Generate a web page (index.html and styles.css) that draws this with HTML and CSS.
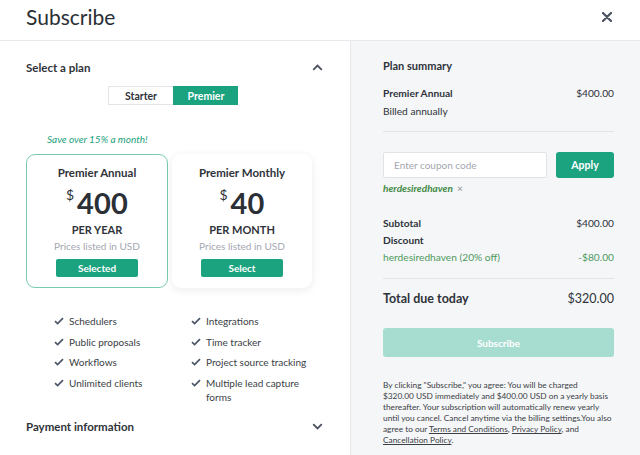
FILE: index.html
```html
<!DOCTYPE html>
<html>
<head>
<meta charset="utf-8">
<link rel="stylesheet" href="styles.css">
</head>
<body>
<div class="modal">
  <header class="modal-head">
    <h1 class="title">Subscribe</h1>
    <svg class="close" width="10" height="10" viewBox="0 0 10 10"><path d="M1 1L9 9M9 1L1 9" stroke="#4a5160" stroke-width="2.2" stroke-linecap="round"/></svg>
  </header>
  <div class="body">
    <section class="left">
      <div class="sec-head">
        <span>Select a plan</span>
        <svg width="11" height="7" viewBox="0 0 11 7"><path d="M1.2 5.8L5.5 1.5L9.8 5.8" fill="none" stroke="#4a5160" stroke-width="1.8"/></svg>
      </div>
      <div class="toggle">
        <span class="tog">Starter</span>
        <span class="tog on">Premier</span>
      </div>
      <div class="save">Save over 15% a month!</div>
      <div class="cards">
        <div class="card selected">
          <div class="card-name">Premier Annual</div>
          <div class="price"><span class="cur">$</span><span class="amt">400</span></div>
          <div class="per">PER YEAR</div>
          <div class="note">Prices listed in USD</div>
          <button class="btn-card">Selected</button>
        </div>
        <div class="card">
          <div class="card-name">Premier Monthly</div>
          <div class="price"><span class="cur">$</span><span class="amt">40</span></div>
          <div class="per">PER MONTH</div>
          <div class="note">Prices listed in USD</div>
          <button class="btn-card">Select</button>
        </div>
      </div>
      <ul class="features">
        <li><svg class="chk" width="10" height="8" viewBox="0 0 10 8"><path d="M1 4.2L3.6 6.6L9 1.2" fill="none" stroke="#4a5568" stroke-width="1.7"/></svg><span>Schedulers</span></li>
        <li><svg class="chk" width="10" height="8" viewBox="0 0 10 8"><path d="M1 4.2L3.6 6.6L9 1.2" fill="none" stroke="#4a5568" stroke-width="1.7"/></svg><span>Integrations</span></li>
        <li><svg class="chk" width="10" height="8" viewBox="0 0 10 8"><path d="M1 4.2L3.6 6.6L9 1.2" fill="none" stroke="#4a5568" stroke-width="1.7"/></svg><span>Public proposals</span></li>
        <li><svg class="chk" width="10" height="8" viewBox="0 0 10 8"><path d="M1 4.2L3.6 6.6L9 1.2" fill="none" stroke="#4a5568" stroke-width="1.7"/></svg><span>Time tracker</span></li>
        <li><svg class="chk" width="10" height="8" viewBox="0 0 10 8"><path d="M1 4.2L3.6 6.6L9 1.2" fill="none" stroke="#4a5568" stroke-width="1.7"/></svg><span>Workflows</span></li>
        <li><svg class="chk" width="10" height="8" viewBox="0 0 10 8"><path d="M1 4.2L3.6 6.6L9 1.2" fill="none" stroke="#4a5568" stroke-width="1.7"/></svg><span class="nw">Project source tracking</span></li>
        <li><svg class="chk" width="10" height="8" viewBox="0 0 10 8"><path d="M1 4.2L3.6 6.6L9 1.2" fill="none" stroke="#4a5568" stroke-width="1.7"/></svg><span>Unlimited clients</span></li>
        <li><svg class="chk" width="10" height="8" viewBox="0 0 10 8"><path d="M1 4.2L3.6 6.6L9 1.2" fill="none" stroke="#4a5568" stroke-width="1.7"/></svg><span>Multiple lead capture<br>forms</span></li>
      </ul>
      <div class="sec-head pay">
        <span>Payment information</span>
        <svg width="11" height="7" viewBox="0 0 11 7"><path d="M1.2 1.2L5.5 5.5L9.8 1.2" fill="none" stroke="#4a5160" stroke-width="1.8"/></svg>
      </div>
    </section>
    <aside class="right">
      <div class="sum-title">Plan summary</div>
      <div class="row first"><b>Premier Annual</b><span>$400.00</span></div>
      <div class="billed">Billed annually</div>
      <div class="coupon">
        <input class="coupon-in" type="text" placeholder="Enter coupon code">
        <button class="apply">Apply</button>
      </div>
      <div class="tag">herdesiredhaven <span class="tag-x">×</span></div>
      <div class="row sub"><b>Subtotal</b><span>$400.00</span></div>
      <div class="row"><b>Discount</b></div>
      <div class="row disc"><span>herdesiredhaven (20% off)</span><span>-$80.00</span></div>
      <div class="row total"><b>Total due today</b><span>$320.00</span></div>
      <button class="subscribe">Subscribe</button>
      <p class="legal">By clicking "Subscribe," you agree: You will be charged<br>$320.00 USD immediately and $400.00 USD on a yearly basis<br>thereafter. Your subscription will automatically renew yearly<br>until you cancel. Cancel anytime via the billing settings.You also<br>agree to our <a href="#">Terms and Conditions</a>, <a href="#">Privacy Policy</a>, and<br><a href="#">Cancellation Policy</a>.</p>
    </aside>
  </div>
</div>
</body>
</html>
```
FILE: styles.css
```css
* { box-sizing: border-box; }
html, body { margin: 0; padding: 0; }
body {
  width: 640px;
  height: 455px;
  overflow: hidden;
  font-family: Lato, "Open Sans", Arial, sans-serif;
  color: #2b2f36;
  background: #fff;
}
.modal { width: 640px; height: 455px; display: flex; flex-direction: column; }
.modal-head {
  height: 41px;
  flex: none;
  display: flex;
  align-items: center;
  justify-content: space-between;
  padding: 0 28px 8px 26px;
  border-bottom: 1px solid #e7e9ec;
}
.title { margin: 0; font-size: 21px; font-weight: 400; color: #2b2f36; }
.close { display: block; margin-top: 2px; }
.body { flex: 1; display: flex; min-height: 0; }
.left {
  width: 351px;
  flex: none;
  padding: 0 27px 0 26px;
  border-right: 1px solid #e5e7ea;
}
.sec-head {
  margin-top: 19px;
  height: 14px;
  display: flex;
  align-items: center;
  justify-content: space-between;
  font-size: 11.5px;
  font-weight: 700;
  color: #2f333a;
}
.sec-head svg { display: block; }
.sec-head.pay { margin-top: 15px; }
.toggle {
  margin: 12px 0 0 82px;
  width: 130px;
  height: 19px;
  display: flex;
}
.tog {
  flex: 1;
  display: flex;
  align-items: center;
  justify-content: center;
  font-size: 10.5px;
  font-weight: 700;
  color: #2f333a;
  border: 1px solid #e3e5e8;
  border-right: none;
}
.tog.on { background: #1ba27f; color: #fff; border-color: #1ba27f; }
.save {
  margin: 28px 0 0 21px;
  height: 12px;
  line-height: 12px;
  font-size: 10px;
  font-style: italic;
  color: #21a17d;
}
.cards { margin-top: 9px; display: flex; gap: 4px; }
.card {
  width: 142px;
  height: 134px;
  border-radius: 9px;
  background: #fff;
  box-shadow: 0 2px 10px rgba(0,0,0,0.08);
  display: flex;
  flex-direction: column;
  align-items: center;
  padding-top: 11px;
  border: 1px solid transparent;
}
.card + .card { width: 140px; }
.card.selected { border-color: #79cab2; box-shadow: none; }
.card-name { font-size: 11.5px; font-weight: 700; line-height: 14px; color: #2f333a; }
.price { margin-top: 11px; display: flex; align-items: flex-start; height: 24px; }
.cur { font-size: 14px; line-height: 14px; margin-right: 3px; margin-top: -3px; color: #2b2f36; }
.amt { font-size: 29px; line-height: 24px; font-weight: 700; color: #2b2f36; letter-spacing: 0.2px; }
.per { margin-top: 8px; font-size: 11px; font-weight: 700; line-height: 13px; color: #2f333a; }
.note { margin-top: 4px; font-size: 10px; line-height: 12px; color: #a3a7b0; }
.btn-card {
  margin-top: 7px;
  width: 82px;
  height: 18px;
  border: none;
  border-radius: 2px;
  background: #1ba27f;
  color: #fff;
  font-family: inherit;
  font-size: 10px;
  font-weight: 700;
  padding: 0;
}
.features {
  list-style: none;
  margin: 26px 0 0 28px;
  padding: 0;
  display: grid;
  grid-template-columns: 137px 130px;
  row-gap: 6.7px;
}
.features li {
  display: flex;
  align-items: flex-start;
  font-size: 10px;
  line-height: 14px;
  color: #3a3e45;
}
.nw { white-space: nowrap; }
.chk { flex: none; margin: 3px 5px 0 0; }
.right {
  flex: 1;
  min-width: 0;
  background: #f5f6f8;
  padding: 0 26px 0 32px;
  font-size: 10px;
  color: #2f333a;
}
.sum-title { margin-top: 18px; font-size: 11px; font-weight: 700; line-height: 14px; }
.row {
  display: flex;
  justify-content: space-between;
  line-height: 14px;
  font-size: 10.2px;
  margin-top: 3px;
}
.row b { font-weight: 700; }
.row.first { margin-top: 13px; }
.billed { margin-top: 4px; line-height: 14px; font-size: 10.2px; padding-bottom: 13px; border-bottom: 1px solid #e3e5e8; }
.coupon { margin-top: 20px; display: flex; gap: 9px; height: 26px; }
.coupon-in {
  width: 164px;
  height: 26px;
  border: 1px solid #e1e3e6;
  border-radius: 2px;
  background: #fff;
  padding: 0 10px;
  font-family: inherit;
  font-size: 10px;
  outline: none;
}
.coupon-in::placeholder { color: #a3a7b0; }
.apply {
  flex: 1;
  min-width: 0;
  height: 26px;
  border: none;
  border-radius: 3px;
  background: #1ba27f;
  color: #fff;
  font-family: inherit;
  font-size: 10.5px;
  font-weight: 700;
}
.tag { margin-top: 4px; line-height: 12px; font-size: 10px; font-style: italic; font-weight: 700; color: #3f8a44; }
.tag-x { font-style: normal; font-weight: 400; color: #8a8f97; font-size: 10px; margin-left: 2px; }
.row.sub { margin-top: 22px; }
.row.disc { color: #4e9a5e; padding-bottom: 14px; border-bottom: 1px solid #e3e5e8; }
.row.total { margin-top: 12px; font-size: 12.5px; line-height: 16px; }
.subscribe {
  margin-top: 21px;
  width: 100%;
  height: 29px;
  border: none;
  border-radius: 3px;
  background: #a6ddd0;
  color: #fff;
  font-family: inherit;
  font-size: 10px;
  font-weight: 700;
}
.legal {
  margin: 23px 0 0;
  font-size: 8.3px;
  line-height: 11px;
  color: #3a3e45;
  white-space: nowrap;
}
.legal a { color: #3a3e45; }
```
